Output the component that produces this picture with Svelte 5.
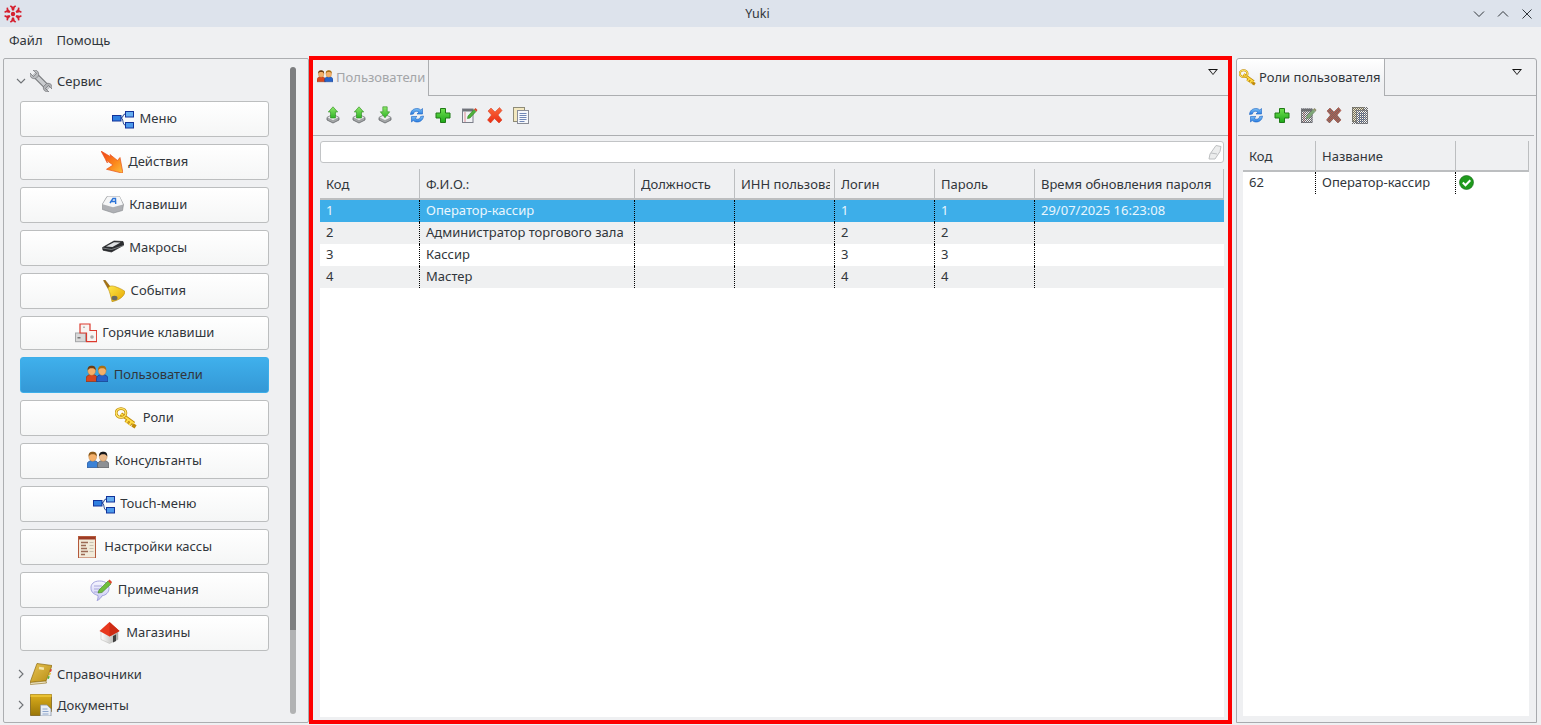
<script>
  const sideButtons = [
    { label: 'Меню', icon: 'tree' },
    { label: 'Действия', icon: 'bolt' },
    { label: 'Клавиши', icon: 'keycap' },
    { label: 'Макросы', icon: 'macro' },
    { label: 'События', icon: 'bell' },
    { label: 'Горячие клавиши', icon: 'hotkeys', short: true },
    { label: 'Пользователи', icon: 'users', active: true },
    { label: 'Роли', icon: 'key' },
    { label: 'Консультанты', icon: 'consultants' },
    { label: 'Touch-меню', icon: 'tree' },
    { label: 'Настройки кассы', icon: 'settings' },
    { label: 'Примечания', icon: 'notes' },
    { label: 'Магазины', icon: 'house' }
  ];
  const columns = ['Код', 'Ф.И.О.:', 'Должность', 'ИНН пользователя', 'Логин', 'Пароль', 'Время обновления пароля'];
  const colWidths = [100, 215, 100, 100, 100, 100, 189];
  const rows = [
    ['1', 'Оператор-кассир', '', '', '1', '1', '29/07/2025 16:23:08'],
    ['2', 'Администратор торгового зала', '', '', '2', '2', ''],
    ['3', 'Кассир', '', '', '3', '3', ''],
    ['4', 'Мастер', '', '', '4', '4', '']
  ];
  const arm = 'M9 6.500h2l.8-3 1.400-1-1-1.300-2.200 1.500-2.200-1.500-1 1.300 1.400 1z';
  const xShape = 'M2 5l3-3 4 4 4.500-4.500 2.500 3-4 4.500 4 5-3 3-4.500-4.500-4 4.500-3-3 4-5z';
</script>

{#snippet person(x, shirt, shirtDark, hair, skin = '#f4b06a')}
  <path d="M{x} 17.500v-2.500c0-3 2.200-4.500 5.700-4.500s5.800 1.500 5.800 4.500v2.500z" fill={shirt} stroke={shirtDark} stroke-width=".7" />
  <ellipse cx={x + 5.700} cy="6.800" rx="3.900" ry="4.500" fill={skin} stroke="#b9772f" stroke-width=".4" />
  <path d="M{x + 1.700} 6.500c-.5-3.500 1.500-4.800 4-4.800s4.500 1.300 4 4.800c-.8-1.700-2-2.300-4-2.300s-3.200.6-4 2.300z" fill={hair} />
{/snippet}

{#snippet keyShape()}
  <path d="M6 7l13 9.500M13.500 12.500l-2.500 3.200M16.500 14.800l-2.200 3.200M20 17.200l-2 3.300" fill="none" stroke="#c08a08" stroke-width="3.800" />
  <path d="M6 7l13 9.500M13.500 12.500l-2.500 3.200M16.500 14.800l-2.200 3.200" fill="none" stroke="#ffdc45" stroke-width="2" />
  <ellipse cx="6" cy="6" rx="4.900" ry="4.400" fill="none" stroke="#c08a08" stroke-width="2.800" />
  <ellipse cx="6" cy="6" rx="4.900" ry="4.400" fill="none" stroke="#ffe767" stroke-width="1.400" />
{/snippet}

{#snippet icon(name)}
  <svg class="icon" width="22" height="22" viewBox="0 0 22 22" aria-hidden="true">
    {#if name === 'tree'}
      <path d="M9 10c2.500 0 1.500-4 4-4M9 10c2.500 0 1.500 7 4 7" fill="none" stroke="#1b3f8f" stroke-width="1" />
      <rect x=".5" y="7.500" width="8.500" height="5.500" fill="#2f7fe0" stroke="#12329a" />
      <rect x="13.500" y="3.500" width="8" height="5.500" fill="#67aef0" stroke="#12329a" />
      <rect x="13.500" y="14.500" width="8" height="5.500" fill="#4d9aec" stroke="#12329a" />
    {:else if name === 'bolt'}
      <path d="M0 0l10 6-1-2.500 7.500 6 2.500-3 3 15.800-16.500-4 6.500-4.300-7-5 1.500 3z" fill="url(#boltFill)" stroke="#e8501a" stroke-width=".7" />
    {:else if name === 'keycap'}
      <path d="M5 2.500h12.500l4 8-1 6-9 2.500-11-3.500-.3-5z" fill="#aeb0b4" stroke="#85888c" stroke-width=".6" />
      <path d="M5.500 2.500h12l3.500 8-10 2.800-10.300-3.100z" fill="#f5f6f7" />
      <path d="M8 9l3-4.500 2.500 0 .2 5.500M9.500 7.500h4" fill="none" stroke="#2c74d8" stroke-width="1.400" />
    {:else if name === 'macro'}
      <path d="M.5 10.500l11.500-6.500 9 .5 1 3.500-12.500 7-8.500-1.800z" fill="#2c2e31" stroke="#111214" stroke-width=".6" />
      <path d="M4 9.500l8-4.300 6.500.2-8 4.500z" fill="#dfe1e3" />
      <path d="M.5 11l9 1.500 12.500-4" fill="none" stroke="#9a9da0" stroke-width=".7" />
    {:else if name === 'bell'}
      <path d="M.5 .5l1.500-.5 5.500 7-2.500 1.500z" fill="#a87412" stroke="#7d5408" stroke-width=".5" />
      <path d="M5 8c2-3 5-2 7-1.500 4 1.500 7 2.500 10 5 -.5 4.500-5 8.500-13 10.200-1-4.500-2-9-4-13.700z" fill="url(#bellFill)" stroke="#b98a0a" stroke-width=".6" />
      <ellipse cx="11.500" cy="18" rx="3" ry="2.300" fill="#6d6a5e" />
    {:else if name === 'hotkeys'}
      <rect x=".5" y="11" width="10" height="8.700" fill="#d9d9d9" stroke="#a4a6a8" />
      <rect x="2.500" y="15" width="3" height="1.500" fill="#777" />
      <path d="M5 2h10v6.500h6.700v11.200h-10.200v-8.700h-6.500z" fill="#f8f4f2" stroke="#dc3a2e" stroke-width="1.200" />
      <circle cx="17" cy="15" r="1.800" fill="#aaa" />
      <rect x="8.500" y="4.500" width="1" height="1.500" fill="#777" />
    {:else if name === 'users'}
      {@render person(0, '#d9481f', '#96310f', '#6c3c12')}
      {@render person(10.500, '#2763c9', '#153c8a', '#a86f14')}
    {:else if name === 'consultants'}
      {@render person(0, '#3b82d6', '#1f4d92', '#8b5a1c')}
      {@render person(10.500, '#8d9094', '#54575a', '#17171a', '#eab98a')}
    {:else if name === 'key'}
      {@render keyShape()}
    {:else if name === 'settings'}
      <rect x="1.500" y=".5" width="17" height="21.500" fill="#f1ead9" stroke="#b4593b" />
      <rect x="2" y="1" width="16" height="2.500" fill="#9c3b25" />
      <path d="M4 6.500h7M4 9.500h5M4 12.500h6M4 15.500h7M4 18.500h4" stroke="#9b6a55" stroke-width="1.300" />
      <path d="M12.500 6.500h4M12.500 9.500h4M12.500 12.500h4M12.500 15.500h4" stroke="#c8c1b0" stroke-width="1" />
    {:else if name === 'notes'}
      <path d="M9.500 2c6 0 9.500 3 9.500 7.500 0 3.800-3 6.800-7 7.300-.7 1.500-2.500 4-5 4.700 1-1.500 1.200-3.400 1-5-3.800-1-7-3.500-7-7C.500 5 4 2 9.500 2z" fill="url(#noteFill)" stroke="#8f8fd6" stroke-width=".8" />
      <path d="M4 7h8M4 10h6M4 13h5" stroke="#a2a2d8" stroke-width=".9" />
      <path d="M8 14l1-3 9-9 3 3-9 8.500z" fill="#6fbe3d" stroke="#3e7f21" stroke-width=".6" />
      <path d="M18 2l1.500-1.500 2.500 2.500-1 2z" fill="#e0452c" />
    {:else if name === 'house'}
      <path d="M2 9v8.500l8.500 4 8.500-4v-8.500z" fill="url(#wallFill)" stroke="#b4b4b0" stroke-width=".5" />
      <path d="M10.500 0l10 9-10 5.500-10-5.500z" fill="#e8381e" />
      <path d="M10.500 0l10 9-10 5.500z" fill="#cd2b14" />
      <path d="M14 14l3-1.500v6.500l-3 1.500z" fill="#3f3f3f" />
    {:else if name === 'wrench'}
      <path d="M4 4l14.500 14.500" stroke="#77797c" stroke-width="6" />
      <path d="M4 4l14.500 14.500" stroke="#c9cbce" stroke-width="3.800" />
      <path d="M0 3l3.500 3.500 3-3L3 0c3-.8 6.500 1.500 5.500 6l-2.500 2.500c-4 1-7-2-6-5.500z" fill="#b8babd" stroke="#727478" stroke-width=".7" />
      <path d="M22 19l-3.500-3.500-3 3 3.500 3.500c-3 .3-6.500-1.500-5.500-5.500l3-3c4-1 6.700 2 5.500 5.500z" fill="#b0b2b5" stroke="#727478" stroke-width=".7" />
    {:else if name === 'book'}
      <path d="M7 .5l15 2-6 15.500-16 1.500z" fill="url(#goldFill)" stroke="#8c6a10" stroke-width=".7" />
      <path d="M0 19.500l16-1.500.5 2-16 1.500z" fill="#efe7c8" stroke="#8c6a10" stroke-width=".6" />
      <rect x="9" y="4" width="5" height="2.500" fill="#f4e7b0" transform="rotate(8 11 5)" />
      <path d="M20.500 6l1.500.4-1 2.600-1.500-.4z" fill="#d8452c" />
      <path d="M19.500 9.500l1.500.4-1 2.600-1.500-.4z" fill="#e2c02c" />
      <path d="M18.300 13l1.500.4-1 2.600-1.500-.4z" fill="#59b02c" />
    {:else if name === 'folderdoc'}
      <path d="M.5 .5h21v17l-11 4h-10z" fill="url(#folderFill)" stroke="#725508" stroke-width=".7" />
      <path d="M.5 .5h21v2.500h-21z" fill="#e8c032" />
      <path d="M10.500 11h6.500l4 4v7h-10.500z" fill="#e9eef5" stroke="#8c95a6" stroke-width=".8" />
      <path d="M12.500 15h5M12.500 17.500h6M12.500 20h6" stroke="#8ea6cc" stroke-width="1" />
    {/if}
  </svg>
{/snippet}

{#snippet tool(name, disabled = false)}
  <span class="tool">
    <svg width="18" height="18" viewBox="0 0 18 18" aria-hidden="true">
      {#if name === 'up' || name === 'down'}
        <path d="M3 11.500l6-3 6 3v2.500l-6 3-6-3z" fill="#a5a7a9" stroke="#55575a" stroke-width=".7" />
        <path d="M3 11.500l6 3 6-3-6-3z" fill="#ecedee" stroke="#77797c" stroke-width=".4" />
        {#if name === 'up'}
          <path d="M9 .8l4.700 5.200h-2.200v6h-5v-6h-2.200z" fill="url(#greenFill)" stroke="#2c8a1e" stroke-width=".6" />
        {:else}
          <path d="M6.800 .8h4.400v5h2.500l-4.700 6-4.700-6h2.500z" fill="url(#greenFill)" stroke="#2c8a1e" stroke-width=".6" />
        {/if}
      {:else if name === 'refresh'}
        <path d="M2.500 8.500c.3-4 3.200-6 6.300-6 1.800 0 3 .6 4 1.500l1.700-1.500v5.500h-5.500l1.800-1.800c-.7-.6-1.400-.9-2.400-.9-1.700 0-2.800 1.100-3 2.700z" fill="url(#blueFill)" stroke="#1a62c4" stroke-width=".6" />
        <path d="M15.500 10c-.3 4-3.200 6-6.300 6-1.800 0-3-.6-4-1.500l-1.700 1.500v-5.500h5.500l-1.800 1.800c.7.6 1.400.9 2.400.9 1.700 0 2.800-1.100 3-2.700z" fill="url(#blueFill)" stroke="#1a62c4" stroke-width=".6" />
      {:else if name === 'plus'}
        <path d="M6.500 2.500h5v4.500h4.500v5h-4.500v4.500h-5v-4.500h-4.500v-5h4.500z" fill="url(#plusFill)" stroke="#1f7a16" stroke-width="1" />
      {:else if name === 'edit'}
        <rect x="2.500" y="3" width="10.500" height="13.500" fill="#f1f2f5" stroke="#7c7f8a" />
        <rect x="3" y="3" width="10" height="2.500" fill="#6f7278" />
        <path d="M5 6v10" stroke="#dc8c94" stroke-width="1" />
        {#if disabled}<rect x="2" y="2.500" width="11.500" height="14.500" fill="url(#softDither)" />{/if}
        <path d="M7.500 12.500l.5-2.500 6-6.500 2 2-6 6.500z" fill={disabled ? '#7fa878' : '#4fb33a'} stroke={disabled ? '#5f7f5a' : '#2d7a20'} stroke-width=".6" />
        <path d="M14 3.500l1.500-1.500 2 2-1 1.500z" fill={disabled ? '#8f8f6a' : '#d6452c'} />
      {:else if name === 'x'}
        <path d={xShape} fill={disabled ? '#c25a48' : 'url(#redFill)'} stroke={disabled ? '#9c4a3c' : '#d0331a'} stroke-width=".5" />
        {#if disabled}<path d={xShape} fill="url(#softDither)" />{/if}
      {:else if name === 'doc'}
        <rect x="1.500" y="1.500" width="11" height="14" fill="#f3e8c0" stroke="#8f8c78" />
        <rect x="5.500" y="4.500" width="11" height="13" fill="#f5f7fc" stroke="#8a8d97" />
        <path d="M7.500 7.500h7M7.500 9.500h7M7.500 11.500h7M7.500 13.500h7M7.500 15.500h5" stroke="#6f86b6" stroke-width="1" />
        {#if disabled}<rect x="1" y="1" width="16" height="17" fill="url(#softDither)" />{/if}
      {/if}
    </svg>
  </span>
{/snippet}

{#snippet sectionRow(open, iconName, label, cls)}
  <div class="section {cls}">
    <svg class="chev" width="10" height="10" viewBox="0 0 10 10">
      <path d={open ? 'M1 3l4 4 4-4' : 'M3 1l4 4-4 4'} fill="none" stroke="#6f7276" stroke-width="1.100" />
    </svg>
    {@render icon(iconName)}
    <span>{label}</span>
  </div>
{/snippet}

<svg class="defs" width="0" height="0" aria-hidden="true">
  <defs>
    <linearGradient id="boltFill" x1="0" y1="0" x2="1" y2="1"><stop offset="0" stop-color="#f2401a" /><stop offset=".6" stop-color="#fb8a1c" /><stop offset="1" stop-color="#fcc040" /></linearGradient>
    <linearGradient id="bellFill" x1="0" y1="0" x2="1" y2="1"><stop offset="0" stop-color="#ffe84a" /><stop offset="1" stop-color="#e5a500" /></linearGradient>
    <linearGradient id="noteFill" x1="0" y1="0" x2="0" y2="1"><stop offset="0" stop-color="#f6f6ff" /><stop offset="1" stop-color="#c9c9f3" /></linearGradient>
    <linearGradient id="wallFill" x1="0" y1="0" x2="1" y2="0"><stop offset="0" stop-color="#ffffff" /><stop offset="1" stop-color="#a8a8a4" /></linearGradient>
    <linearGradient id="goldFill" x1="0" y1="0" x2="1" y2="1"><stop offset="0" stop-color="#e8c455" /><stop offset="1" stop-color="#b88d12" /></linearGradient>
    <linearGradient id="folderFill" x1="0" y1="0" x2="0" y2="1"><stop offset="0" stop-color="#dcae1c" /><stop offset="1" stop-color="#9a7608" /></linearGradient>
    <linearGradient id="greenFill" x1="0" y1="0" x2="0" y2="1"><stop offset="0" stop-color="#8fe86b" /><stop offset="1" stop-color="#2fb426" /></linearGradient>
    <linearGradient id="plusFill" x1="0" y1="0" x2="0" y2="1"><stop offset="0" stop-color="#6fe04f" /><stop offset="1" stop-color="#1ea81a" /></linearGradient>
    <linearGradient id="blueFill" x1="0" y1="0" x2="0" y2="1"><stop offset="0" stop-color="#7cc0f5" /><stop offset="1" stop-color="#2a7de0" /></linearGradient>
    <linearGradient id="redFill" x1="0" y1="0" x2="0" y2="1"><stop offset="0" stop-color="#fb6a3c" /><stop offset="1" stop-color="#ea2d12" /></linearGradient>
    <pattern id="softDither" width="2" height="2" patternUnits="userSpaceOnUse">
      <rect width="1" height="1" fill="#6a6a6a" /><rect x="1" y="1" width="1" height="1" fill="#6a6a6a" />
    </pattern>
  </defs>
</svg>

<div class="window">
  <header class="titlebar">
    <svg class="logo" width="20" height="20" viewBox="0 0 20 20" aria-hidden="true">
      <g fill="#d5202f">
        <circle cx="10" cy="10" r="2.200" />
        {#each [0, 60, 120, 180, 240, 300] as a}
          <path transform="rotate({a} 10 10)" d={arm} />
        {/each}
      </g>
    </svg>
    <span class="title">Yuki</span>
    <div class="controls">
      <svg width="12" height="12" viewBox="0 0 12 12"><path d="M1 3.500l5 5 5-5" fill="none" stroke="#31363b" stroke-width="1" /></svg>
      <svg width="12" height="12" viewBox="0 0 12 12"><path d="M1 8.500l5-5 5 5" fill="none" stroke="#31363b" stroke-width="1" /></svg>
      <svg width="12" height="12" viewBox="0 0 12 12"><path d="M1.500 1.500l9 9M10.500 1.500l-9 9" fill="none" stroke="#31363b" stroke-width="1" /></svg>
    </div>
  </header>

  <nav class="menubar">
    <span>Файл</span>
    <span>Помощь</span>
  </nav>

  <main class="workspace">
    <aside class="side panel">
      <div class="side-list">
        {@render sectionRow(true, 'wrench', 'Сервис', 'first')}
        <div class="buttons">
          {#each sideButtons as b}
            <button class="side-btn" class:active={b.active} class:short={b.short}>
              {@render icon(b.icon)}
              <span>{b.label}</span>
            </button>
          {/each}
        </div>
        {@render sectionRow(false, 'book', 'Справочники', 'next')}
        {@render sectionRow(false, 'folderdoc', 'Документы', 'last')}
      </div>
      <div class="scroll"><div class="thumb"></div></div>
    </aside>

    <section class="center">
      <div class="tabbar">
        <div class="tab inactive">
          <svg class="tab-icon" width="16" height="16" viewBox="0 0 22 22" aria-hidden="true">
            {@render person(0, '#d9481f', '#96310f', '#6c3c12')}
            {@render person(10.500, '#2763c9', '#153c8a', '#a86f14')}
          </svg>
          <span>Пользователи</span>
        </div>
        <div class="tab-fill"><span class="menu-arrow"></span></div>
      </div>
      <div class="toolbar">
        {@render tool('up')}
        {@render tool('up')}
        {@render tool('down')}
        <span class="tool-gap"></span>
        {@render tool('refresh')}
        {@render tool('plus')}
        {@render tool('edit')}
        {@render tool('x')}
        {@render tool('doc')}
      </div>
      <div class="content">
        <div class="search">
          <svg width="14" height="16" viewBox="0 0 14 16" aria-hidden="true">
            <path d="M1 15l1-5 6-8.500 5 1-1 5-5 7.500z" fill="#eceded" stroke="#bdbfc1" stroke-width="1" />
            <path d="M3 9l6 1" stroke="#bdbfc1" stroke-width="1" />
          </svg>
        </div>
        <div class="table-wrap">
          <table>
            <colgroup>
              {#each colWidths as w}<col style="width:{w}px" />{/each}
            </colgroup>
            <thead>
              <tr>{#each columns as c}<th><div>{c}</div></th>{/each}</tr>
            </thead>
            <tbody>
              {#each rows as r, i}
                <tr class:sel={i === 0} class:alt={i % 2 === 1}>
                  {#each r as v}<td>{v}</td>{/each}
                </tr>
              {/each}
            </tbody>
          </table>
        </div>
      </div>
    </section>

    <section class="right panel">
      <div class="tabbar">
        <div class="tab current">
          <svg class="tab-icon" width="17" height="17" viewBox="0 0 22 22" aria-hidden="true">
            {@render keyShape()}
          </svg>
          <span>Роли пользователя</span>
        </div>
        <div class="tab-fill"><span class="menu-arrow"></span></div>
      </div>
      <div class="toolbar">
        {@render tool('refresh')}
        {@render tool('plus')}
        {@render tool('edit', true)}
        {@render tool('x', true)}
        {@render tool('doc', true)}
      </div>
      <div class="content">
        <div class="table-wrap">
          <table>
            <colgroup><col style="width:73px" /><col style="width:140px" /><col style="width:73px" /></colgroup>
            <thead><tr><th><div>Код</div></th><th><div>Название</div></th><th><div></div></th></tr></thead>
            <tbody>
              <tr>
                <td>62</td>
                <td>Оператор-кассир</td>
                <td class="check">
                  <svg width="15" height="15" viewBox="0 0 15 15" aria-hidden="true">
                    <circle cx="7.500" cy="7.500" r="7" fill="#1f9a1c" stroke="#14661a" stroke-width=".6" />
                    <path d="M3.800 7.500l2.700 2.800 4.800-5" fill="none" stroke="#fff" stroke-width="2" />
                  </svg>
                </td>
              </tr>
            </tbody>
          </table>
        </div>
      </div>
    </section>
  </main>
</div>

<style>
  :global(body) {
    margin: 0;
    background: #eff0f2;
  }
  .defs {
    position: absolute;
  }
  .window {
    width: 1541px;
    height: 725px;
    display: flex;
    flex-direction: column;
    overflow: hidden;
    font-family: "Noto Sans", "Open Sans", sans-serif;
    font-size: 13px;
    color: #31363b;
    background: #eff0f2;
  }
  .titlebar {
    position: relative;
    flex: 0 0 27px;
    display: flex;
    align-items: center;
    padding: 0 8px 0 3px;
    background: #dde3ec;
  }
  .title {
    position: absolute;
    left: 0;
    right: 26px;
    text-align: center;
    font-size: 12.500px;
  }
  .logo {
    flex: none;
  }
  .controls {
    margin-left: auto;
    display: flex;
    align-items: center;
    gap: 12px;
  }
  .menubar {
    flex: 0 0 27px;
    box-sizing: border-box;
    display: flex;
    align-items: center;
    gap: 14px;
    padding: 0 9px 2px;
  }
  .workspace {
    flex: 1;
    min-height: 0;
    display: flex;
    padding: 2px 4px 1px 3px;
  }
  .panel {
    box-sizing: border-box;
    margin: 2px 0 1px;
    border: 1px solid #acaeb1;
  }
  .side {
    flex: 0 0 306px;
    display: flex;
    border-radius: 2px;
  }
  .side-list {
    flex: 0 0 285px;
    padding: 6px 0 0 16px;
    box-sizing: border-box;
  }
  .section {
    display: flex;
    align-items: center;
    height: 31px;
    margin-left: -4px;
    gap: 5px;
  }
  .section.first {
    height: 32px;
    margin-bottom: 4px;
  }
  .section.next {
    height: 32px;
    margin-top: 7px;
  }
  .section.last {
    height: 29px;
  }
  .chev {
    margin-right: -1px;
  }
  .section :global(.icon) {
    flex: none;
  }
  .buttons {
    width: 249px;
    display: flex;
    flex-direction: column;
    gap: 7px;
  }
  .side-btn {
    height: 36px;
    box-sizing: border-box;
    display: flex;
    align-items: center;
    justify-content: center;
    gap: 5.500px;
    padding: 0;
    border: 1px solid #bcbebf;
    border-radius: 3px;
    background: linear-gradient(#ffffff, #f5f6f6);
    font: inherit;
    color: inherit;
  }
  .side-btn span {
    margin-bottom: 2px;
  }
  .side-btn.short {
    height: 34px;
  }
  .side-btn.active {
    border-color: #3daee9;
    background: linear-gradient(#3fb0ec, #3498d6);
  }
  .scroll {
    flex: 0 0 6px;
    margin: 8px 0 8px 1px;
    border-radius: 3px;
    background: #b1b2b3;
    overflow: hidden;
  }
  .thumb {
    height: 563px;
    border-radius: 3px 3px 0 0;
    background: #7d7e80;
  }
  .center {
    flex: 0 0 923px;
    box-sizing: border-box;
    margin: 0 4px 0 0;
    border: 4px solid #fe0000;
    display: flex;
    flex-direction: column;
    min-width: 0;
  }
  .right {
    flex: 0 0 301px;
    display: flex;
    flex-direction: column;
    border-radius: 3px 3px 0 0;
    border-color: #a8aaae;
  }
  .tabbar {
    flex: none;
    display: flex;
  }
  .center .tabbar {
    height: 36px;
  }
  .right .tabbar {
    height: 37px;
  }
  .tab {
    box-sizing: border-box;
    display: flex;
    align-items: center;
    gap: 3px;
    border-right: 1px solid #acaeb1;
    white-space: nowrap;
  }
  .tab.inactive {
    width: 116px;
    padding: 0 0 2px 4px;
    color: #a3a5a8;
  }
  .tab.current {
    width: 148px;
    padding: 0 0 1px 2px;
    background: linear-gradient(#ffffff, #eff0f2 70%);
    border-top-left-radius: 3px;
  }
  .tab-fill {
    flex: 1;
    position: relative;
    border-bottom: 1px solid #acaeb1;
  }
  .menu-arrow {
    position: absolute;
    right: 10px;
    top: 9px;
    width: 0;
    height: 0;
    border-left: 5px solid transparent;
    border-right: 5px solid transparent;
    border-top: 6px solid #111;
  }
  .right .menu-arrow {
    right: 14px;
    top: 10px;
  }
  .menu-arrow::after {
    content: "";
    position: absolute;
    left: -3px;
    top: -5px;
    border-left: 3px solid transparent;
    border-right: 3px solid transparent;
    border-top: 4px solid #eff0f2;
  }
  .toolbar {
    flex: none;
    box-sizing: border-box;
    height: 40px;
    display: flex;
    align-items: center;
    padding-left: 7px;
    padding-bottom: 1px;
    border-bottom: 1px solid #acaeb1;
  }
  .right .toolbar {
    margin: 0 2px 0 1px;
    padding-left: 5px;
  }
  .tool {
    flex: 0 0 26px;
    display: flex;
    justify-content: center;
  }
  .tool-gap {
    flex: 0 0 6px;
  }
  .content {
    flex: 1;
    min-height: 0;
    display: flex;
    flex-direction: column;
    padding: 5px 4px 3px 7px;
  }
  .right .content {
    padding: 5px 7px 6px 6px;
  }
  .search {
    flex: none;
    box-sizing: border-box;
    height: 22px;
    margin-bottom: 6px;
    display: flex;
    align-items: center;
    justify-content: flex-end;
    padding-right: 1px;
    background: #fff;
    border: 1px solid #c2c4c6;
    border-radius: 3px;
  }
  .table-wrap {
    flex: 1;
    min-height: 0;
    background: #fff;
    overflow: hidden;
  }
  table {
    border-collapse: separate;
    border-spacing: 0;
    table-layout: fixed;
    width: 100%;
  }
  th {
    height: 31px;
    padding: 0;
    background: #eff0f2;
    font-weight: 400;
    text-align: left;
    border-right: 1px solid #bcbec0;
    border-bottom: 2px solid #bcbec0;
    box-sizing: border-box;
  }
  th div {
    margin: 0 4px 0 6px;
    white-space: nowrap;
    overflow: hidden;
  }
  td {
    height: 22px;
    padding: 0 5px 2px 6px;
    box-sizing: border-box;
    border-right: 1px dotted #000;
    white-space: nowrap;
    overflow: hidden;
  }
  td:last-child {
    border-right: none;
  }
  tr.alt td {
    background: #eff0f1;
  }
  tr.sel td {
    background: #3daee9;
    color: #eaf6fd;
  }
  .check svg {
    display: block;
    margin-left: -3px;
    margin-top: 1px;
  }
</style>
